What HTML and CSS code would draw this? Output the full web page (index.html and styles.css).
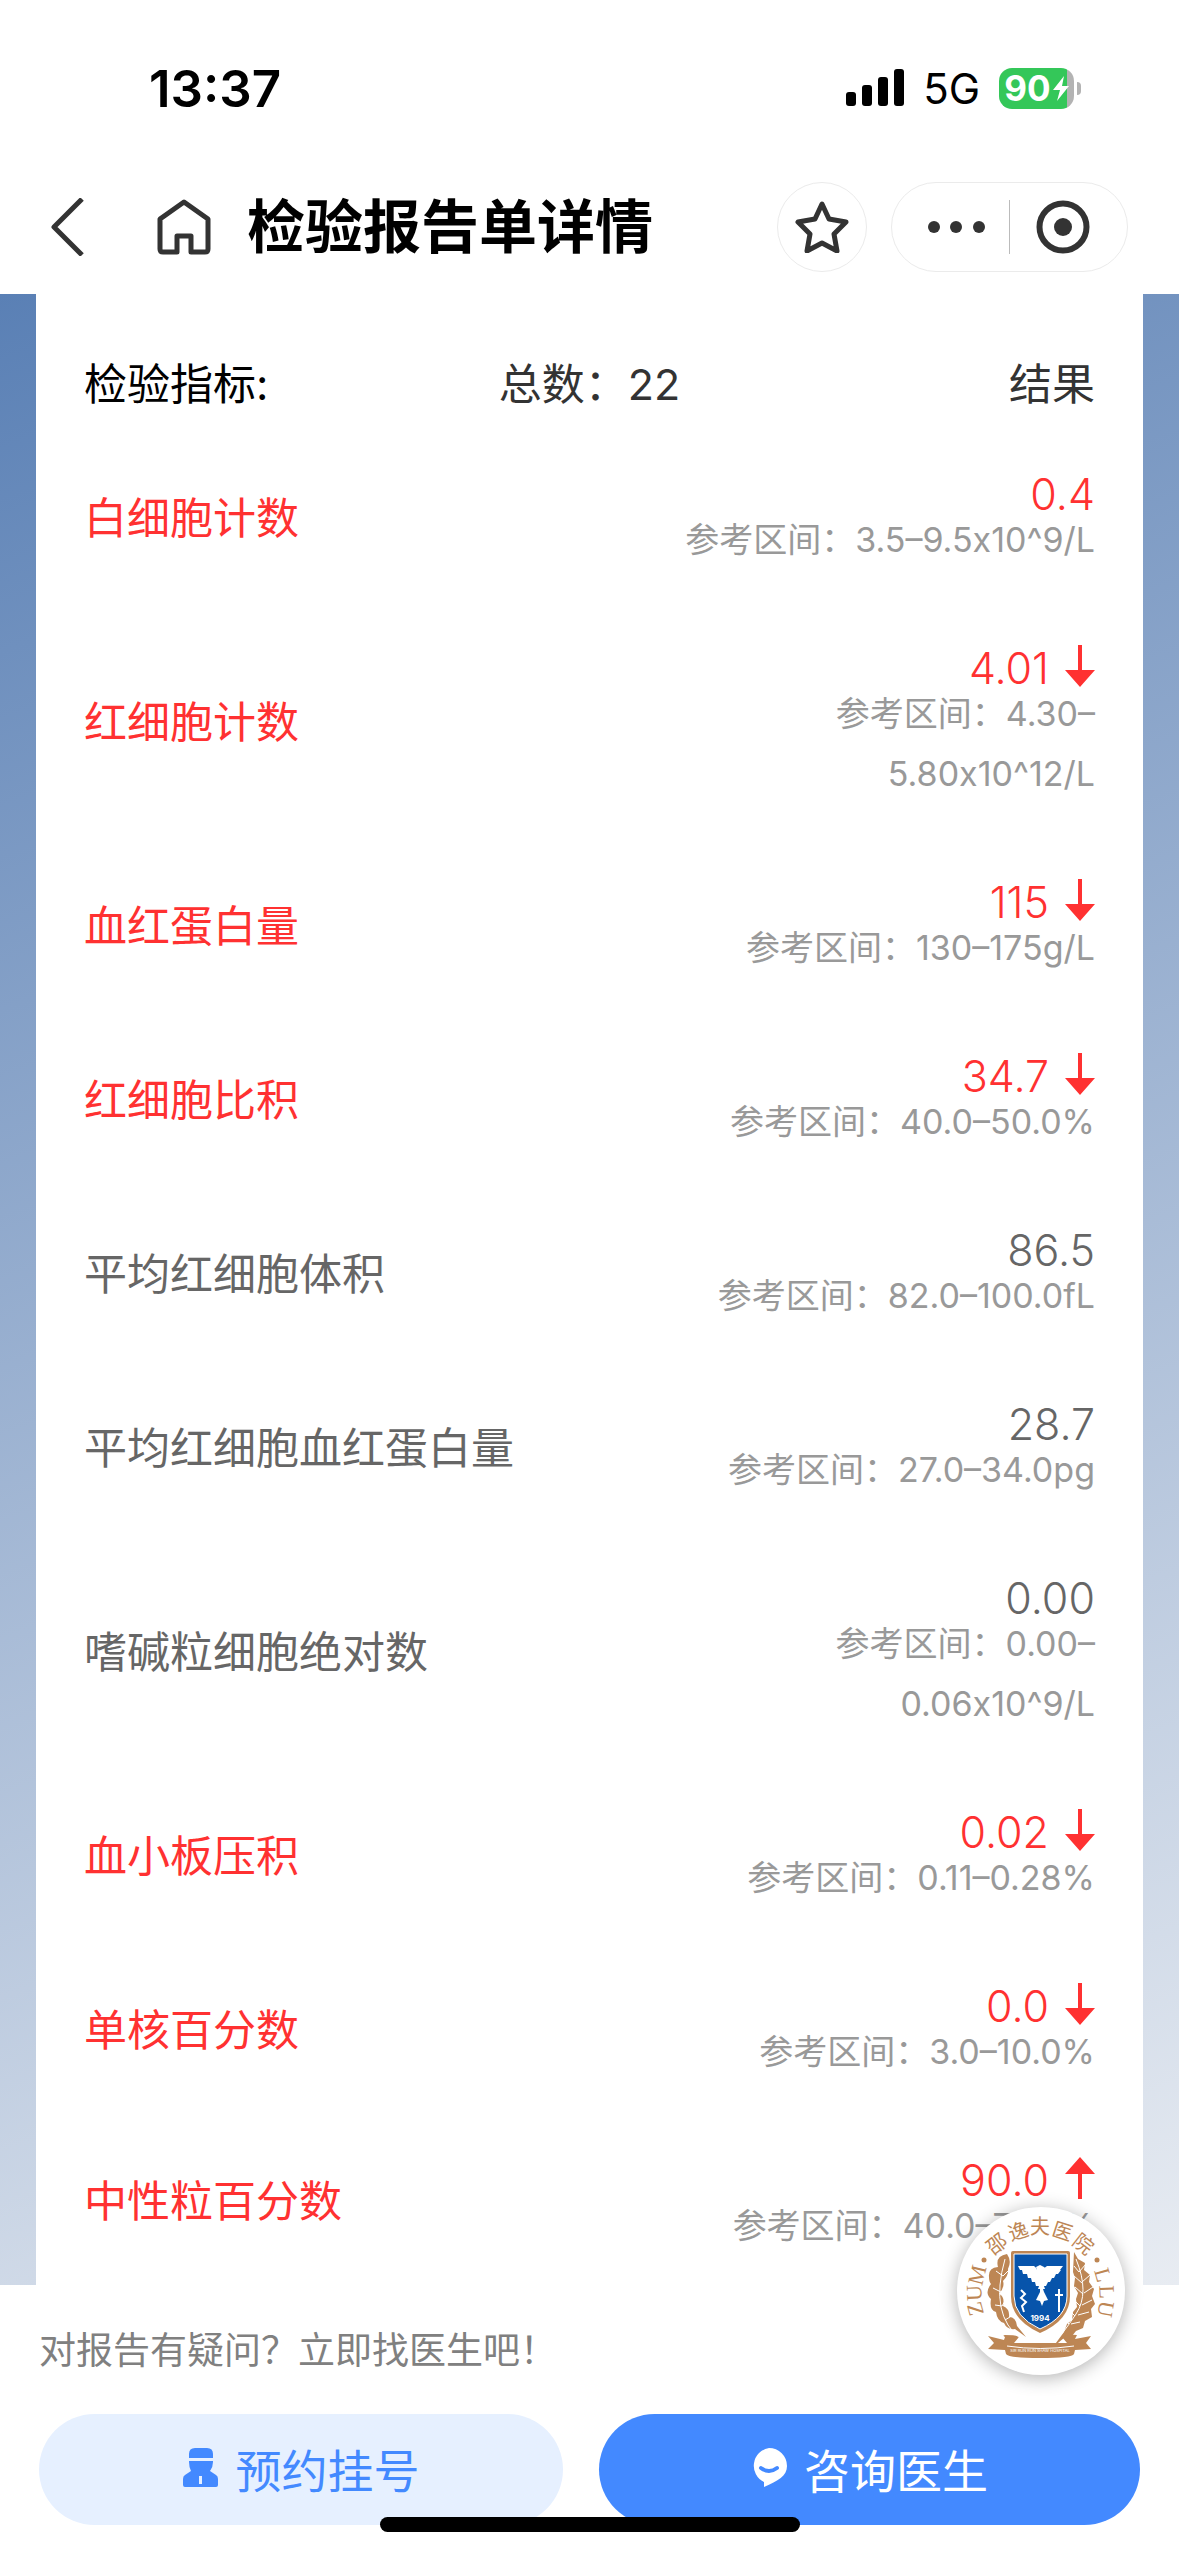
FILE: index.html
```html
<!DOCTYPE html>
<html lang="zh-CN">
<head>
    <meta charset="UTF-8">
    <meta name="viewport" content="width=device-width, initial-scale=1.0">
    <title>检验报告单详情</title>
    <link rel="stylesheet" href="styles.css">
</head>
<body>

<div class="status-bar">
    <span class="time">13:37</span>
    <div class="status-right">
        <svg class="signal" viewBox="0 0 58 38" aria-hidden="true">
            <rect x="0" y="23" width="10" height="14" rx="3"/>
            <rect x="16" y="16" width="10" height="21" rx="3"/>
            <rect x="32" y="8" width="10" height="29" rx="3"/>
            <rect x="48" y="0" width="10" height="37" rx="3"/>
        </svg>
        <span class="network">5G</span>
        <div class="battery">
            <span class="battery-level">90</span>
            <svg class="bolt" viewBox="0 0 16 25" aria-hidden="true"><path d="M11 0 0 14h7L4 25 16 10H9z"/></svg>
        </div>
        <span class="battery-tip"></span>
    </div>
</div>

<header class="nav-bar">
    <button class="icon-button back" aria-label="返回">
        <svg viewBox="0 0 34 58"><path d="M32 1 4 29l28 28"/></svg>
    </button>
    <button class="icon-button home" aria-label="首页">
        <svg viewBox="0 0 54 56"><path d="M20 53H6q-3 0-3-3V20L27 3l24 17v30q0 3-3 3H34V37H20z"/></svg>
    </button>
    <h1>检验报告单详情</h1>
    <button class="icon-button favorite" aria-label="收藏">
        <svg viewBox="0 0 54 52"><path d="M27 3l7 15 17 3-12 12 3 17-15-8-15 8 3-17L3 21l17-3z"/></svg>
    </button>
    <div class="capsule">
        <button class="icon-button more" aria-label="更多">
            <svg viewBox="0 0 58 12"><circle cx="6" cy="6" r="6"/><circle cx="28" cy="6" r="6"/><circle cx="51" cy="6" r="6"/></svg>
        </button>
        <button class="icon-button close" aria-label="关闭">
            <svg viewBox="0 0 54 54"><circle class="ring" cx="27" cy="27" r="23.5"/><circle cx="27" cy="27" r="9"/></svg>
        </button>
    </div>
</header>

<svg class="symbols" aria-hidden="true">
    <symbol id="arrow" viewBox="0 0 30 42"><path d="M13 0h4v25h13L15 42 0 25h13z"/></symbol>
</svg>

<main class="report">
    <table class="result-table">
        <thead>
            <tr>
                <th class="title">检验指标:</th>
                <th class="total">总数：22</th>
                <th class="result">结果</th>
            </tr>
        </thead>
        <tbody>
            <tr class="abnormal">
                <td>白细胞计数</td>
                <td colspan="2" class="result"><div class="value">0.4</div><div class="range">参考区间：3.5–9.5x10^9/L</div></td>
            </tr>
            <tr class="abnormal">
                <td>红细胞计数</td>
                <td colspan="2" class="result"><div class="value">4.01<svg class="arrow"><use href="#arrow"/></svg></div><div class="range">参考区间：4.30–<br>5.80x10^12/L</div></td>
            </tr>
            <tr class="abnormal">
                <td>血红蛋白量</td>
                <td colspan="2" class="result"><div class="value">115<svg class="arrow"><use href="#arrow"/></svg></div><div class="range">参考区间：130–175g/L</div></td>
            </tr>
            <tr class="abnormal">
                <td>红细胞比积</td>
                <td colspan="2" class="result"><div class="value">34.7<svg class="arrow"><use href="#arrow"/></svg></div><div class="range">参考区间：40.0–50.0%</div></td>
            </tr>
            <tr>
                <td>平均红细胞体积</td>
                <td colspan="2" class="result"><div class="value">86.5</div><div class="range">参考区间：82.0–100.0fL</div></td>
            </tr>
            <tr>
                <td>平均红细胞血红蛋白量</td>
                <td colspan="2" class="result"><div class="value">28.7</div><div class="range">参考区间：27.0–34.0pg</div></td>
            </tr>
            <tr>
                <td>嗜碱粒细胞绝对数</td>
                <td colspan="2" class="result"><div class="value">0.00</div><div class="range">参考区间：0.00–<br>0.06x10^9/L</div></td>
            </tr>
            <tr class="abnormal">
                <td>血小板压积</td>
                <td colspan="2" class="result"><div class="value">0.02<svg class="arrow"><use href="#arrow"/></svg></div><div class="range">参考区间：0.11–0.28%</div></td>
            </tr>
            <tr class="abnormal">
                <td>单核百分数</td>
                <td colspan="2" class="result"><div class="value">0.0<svg class="arrow"><use href="#arrow"/></svg></div><div class="range">参考区间：3.0–10.0%</div></td>
            </tr>
            <tr class="abnormal">
                <td>中性粒百分数</td>
                <td colspan="2" class="result"><div class="value">90.0<svg class="arrow up"><use href="#arrow"/></svg></div><div class="range">参考区间：40.0–75.0%</div></td>
            </tr>
        </tbody>
    </table>
</main>

<footer class="action-bar">
    <p class="tip">对报告有疑问？立即找医生吧！</p>
    <div class="actions">
        <button class="action book">
            <svg viewBox="0 0 36 40" aria-hidden="true">
                <path fill-rule="evenodd" d="M6 10V6q0-6 6-6h12q6 0 6 6v4zM6 13h24v1q0 5-3 9l6 4q2 1 2 4v6q0 2-2 2H2q-2 0-2-2v-6q0-3 2-4l6-4q-2-4-2-9zm10 15v8h3v-8z"/>
            </svg>
            预约挂号
        </button>
        <button class="action consult">
            <svg viewBox="0 0 36 40" aria-hidden="true">
                <path d="M18 0a18 18 0 0 1 18 18c0 10-9 15-23 21v-5A18 18 0 0 1 18 0z"/>
                <path class="smile" d="M10 20q8 6 16 0"/>
            </svg>
            咨询医生
        </button>
    </div>
    <button class="hospital-logo" aria-label="邵逸夫医院">
        <svg viewBox="0 0 168 168">
            <g class="ring-name">
                <text transform="translate(39 36) rotate(-38)">邵</text>
                <text transform="translate(61 23) rotate(-18)">逸</text>
                <text transform="translate(83 18)">夫</text>
                <text transform="translate(106 23) rotate(18)">医</text>
                <text transform="translate(127 36) rotate(38)">院</text>
            </g>
            <g class="ring-letters">
                <text transform="translate(18 102) rotate(-105)">Z</text>
                <text transform="translate(17 86) rotate(-92)">U</text>
                <text transform="translate(20 68) rotate(-76)">M</text>
                <text transform="translate(146 68) rotate(74)">L</text>
                <text transform="translate(150 85) rotate(88)">L</text>
                <text transform="translate(149 102) rotate(100)">U</text>
            </g>
            <g class="gold">
                <circle cx="27" cy="53" r="2.5"/>
                <circle cx="140" cy="53" r="2.5"/>
                <path d="M50 47q-12 2-9 13-10 1-9 10 0 5 2 7-7 9 0 15-2 11 5 13 1 9 8 11 3 7 11 6l11 8-9-11q-1-9-8-9 1-8-6-11 2-10-4-12 6-7 4-13 6-6 5-12 4-8-1-15z"/>
                <path d="M117 45l4 7 7 4-1 7 6 5-1 7 5 7-2 7 3 8-4 5 1 8-7 4-2 7-7 3-4 5-8 2-11 9 11-15 3-8 5-4 1-8 4-5-1-8 2-6-4-7 1-8-2-6z"/>
                <path d="M31 129l16 4 1-3q-3-2 0-2 11 0 14 2l-5 6h53l-5-6q6-3 15-2l-2 4 16-3-5 7 5 6-16 1-1 4q-2 4-34 4t-34-4l-1-4-17-1 6-6z"/>
                <path d="M54 46q0-2 2-2h55q2 0 2 2v43q0 24-30 37-29-13-29-37z"/>
            </g>
            <g class="veins">
                <path d="M48 52q-8 28-4 48t20 32M39 64l7 5 6-6M36 81l8 4 7-7M38 98l7 1 5-8M48 113l5-3 2-8"/>
                <path d="M119 52q14 34 0 55t-20 26M122 65l7-8M125 75l8-7M127 86l9-6M125 98l10-5M121 108l11-3M114 117l9-2M122 65l-5-6M125 76l-8-7M126 87l-8-7M123 99l-7-7M118 109l-6-6M112 117l-4-4"/>
                <path d="M50 139q33 5 67 0"/>
            </g>
            <path class="shield" d="M57 47h53v42q0 21-27 33-26-12-26-33z"/>
            <path class="emblem" d="M61 59h16q2 1 3 4l-1-3 4-2 4 2 1 1-2 2q2-3 4-4h16l-3 4h1l-3 4-2 0-2 4-2 0-2 4-2 0-2 4-2 0 1 3-2 0 1 3 4 8-4 1-2 5-2-5-4-1 4-8 0-3-2 0 1-3-3 0-1-4-3 0-1-4-3 0-1-4-4 0-1-4-2 0z"/>
            <path class="emblem-line" d="M64 83l4 4-4 4 5 4-4 4 2 6M102 82v23M98 88h8"/>
            <text class="year" x="83" y="111">1994</text>
            <text class="ribbon" x="83" y="143">SIR RUN RUN SHAW HOSPITAL</text>
        </svg>
    </button>
    <div class="home-indicator"></div>
</footer>

</body>
</html>
```
FILE: styles.css
```css
:root {
    --text: #333;
    --muted: #999;
    --normal: #666;
    --red: #ff3131;
    --blue: #4389ff;
    --light-blue: #e6f0ff;
    --gold: #bd8654;
}
* {
    box-sizing: border-box;
}
body {
    margin: 0;
    min-height: 100vh;
    display: flex;
    flex-direction: column;
    background: #fff;
    color: var(--text);
    font-family: Inter, 'Noto Sans CJK SC', sans-serif;
}
button {
    border: none;
    padding: 0;
    background: none;
    font-family: inherit;
    color: inherit;
    cursor: pointer;
}
.symbols {
    position: absolute;
    width: 0;
    height: 0;
}
.status-bar {
    display: flex;
    justify-content: space-between;
    align-items: center;
    height: 178px;
    padding: 0 98px 2px 149px;
    color: #000;
}
.time {
    font-size: 51px;
    font-weight: 600;
}
.status-right {
    display: flex;
    align-items: center;
}
.signal {
    width: 58px;
    height: 38px;
}
.network {
    margin: 0 19px;
    font-size: 42px;
}
.battery {
    display: flex;
    align-items: center;
    justify-content: center;
    gap: 2px;
    width: 75px;
    height: 41px;
    border-radius: 13px;
    background: linear-gradient(90deg, #34c759 91%, #b3b3b3 91%);
}
.battery-level {
    color: #fff;
    font-size: 35px;
    font-weight: 700;
}
.bolt {
    width: 16px;
    height: 25px;
    fill: #fff;
}
.battery-tip {
    width: 4px;
    height: 13px;
    margin-left: 3px;
    border-radius: 0 6px 6px 0;
    background: #b3b3b3;
}
.nav-bar {
    display: flex;
    align-items: center;
    height: 116px;
    padding: 0 51px 18px 50px;
}
.icon-button svg {
    display: block;
    fill: none;
    stroke: var(--text);
    stroke-width: 5;
    stroke-linejoin: round;
}
.back svg {
    width: 34px;
    height: 58px;
}
.home {
    margin: 0 36px 0 73px;
}
.home svg {
    width: 54px;
    height: 56px;
}
.nav-bar h1 {
    flex: 1;
    margin: 0;
    color: #000;
    font-size: 58px;
    line-height: 80px;
    font-weight: 600;
    white-space: nowrap;
}
.favorite {
    display: flex;
    align-items: center;
    justify-content: center;
    width: 90px;
    height: 90px;
    margin-right: 24px;
    border: 1px solid #ebebeb;
    border-radius: 50%;
}
.favorite svg {
    width: 54px;
    height: 52px;
}
.capsule {
    display: flex;
    align-items: center;
    width: 237px;
    height: 90px;
    border: 1px solid #ebebeb;
    border-radius: 45px;
}
.capsule .icon-button {
    display: flex;
    align-items: center;
    justify-content: center;
    flex: 1;
    height: 54px;
}
.more {
    padding-left: 12px;
    border-right: 1px solid #bbb;
}
.close {
    padding-right: 12px;
}
.more svg,
.close svg {
    fill: var(--text);
    stroke: none;
}
.more svg {
    width: 58px;
    height: 12px;
}
.close svg {
    width: 54px;
    height: 54px;
}
.close .ring {
    fill: none;
    stroke: var(--text);
    stroke-width: 6;
}
.report {
    padding: 0 36px;
    background: linear-gradient(160deg, #5a80b5, #e8ecf2);
}
.result-table {
    width: 100%;
    border-collapse: collapse;
    table-layout: fixed;
    background: #fff;
    font-size: 43px;
}
.result-table th {
    height: 137px;
    padding: 42px 0 0;
    font-weight: 400;
    line-height: 60px;
    text-align: center;
}
.result-table .title {
    padding-left: 48px;
    color: #000;
    text-align: left;
}
.result-table td {
    padding: 0 0 6px 48px;
    color: var(--normal);
    font-weight: 400;
    white-space: nowrap;
}
.result-table .result {
    padding-right: 48px;
    text-align: right;
}
.result-table td.result {
    padding-top: 47px;
    padding-bottom: 35px;
}
.result-table tr:last-child td.result {
    padding-bottom: 29px;
}
.result-table .abnormal td {
    color: var(--red);
}
.value {
    display: flex;
    justify-content: flex-end;
    align-items: center;
    gap: 16px;
    height: 32px;
    font-weight: 300;
    line-height: 32px;
}
.arrow {
    width: 30px;
    height: 42px;
    margin-bottom: 4px;
    fill: currentColor;
}
.arrow.up {
    transform: rotate(180deg);
}
.result-table .range {
    color: var(--muted);
    font-size: 34px;
    line-height: 60px;
}
.action-bar {
    position: relative;
    flex: 1;
    padding: 36px 39px 0;
    background: #fff;
}
.tip {
    margin: 0 0 33px;
    color: #808080;
    font-size: 37px;
    line-height: 60px;
}
.actions {
    display: flex;
    gap: 36px;
}
.action {
    display: flex;
    align-items: center;
    justify-content: center;
    gap: 17px;
    height: 111px;
    padding-bottom: 4px;
    border-radius: 56px;
    font-size: 46px;
}
.action svg {
    width: 36px;
    height: 40px;
    fill: currentColor;
}
.book {
    flex: 524;
    background: var(--light-blue);
    color: var(--blue);
}
.consult {
    flex: 541;
    background: var(--blue);
    color: #fff;
}
.consult .smile {
    fill: none;
    stroke: var(--blue);
    stroke-width: 4;
    stroke-linecap: round;
}
.home-indicator {
    position: absolute;
    bottom: 24px;
    left: 50%;
    width: 420px;
    height: 15px;
    margin-left: -210px;
    border-radius: 8px;
    background: #000;
}
/* floating hospital badge */
.hospital-logo {
    position: absolute;
    top: -78px;
    right: 54px;
    width: 168px;
    height: 168px;
    border-radius: 50%;
    background: #fff;
    box-shadow: 0 3px 18px rgba(0, 0, 0, 0.3);
}
.hospital-logo svg {
    display: block;
    width: 168px;
    height: 168px;
}
.hospital-logo text {
    fill: var(--gold);
    text-anchor: middle;
    dominant-baseline: central;
}
.ring-name {
    font-family: 'Noto Sans CJK SC', sans-serif;
    font-size: 20px;
}
.ring-letters {
    font-family: 'Liberation Serif', serif;
    font-size: 22px;
}
.gold {
    fill: var(--gold);
}
.veins {
    fill: none;
    stroke: #fff;
    stroke-width: 1;
}
.shield {
    fill: #0754ab;
    stroke: #fff;
    stroke-width: 1;
}
.emblem {
    fill: #fff;
}
.emblem-line {
    fill: none;
    stroke: #fff;
    stroke-width: 2;
}
.hospital-logo .year {
    fill: #fff;
    font-size: 8px;
    font-weight: 700;
}
.hospital-logo .ribbon {
    fill: #fff;
    font-size: 4px;
}
```
